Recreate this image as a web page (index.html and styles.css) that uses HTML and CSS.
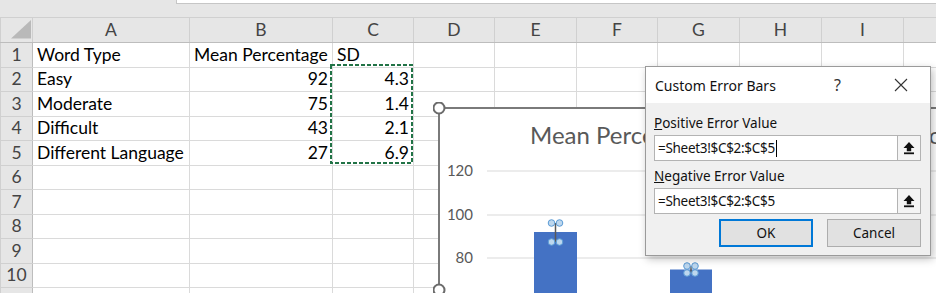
FILE: index.html
```html
<!DOCTYPE html>
<html lang="en">
<head>
    <meta charset="UTF-8">
    <title>Custom Error Bars</title>
    <link rel="stylesheet" href="styles.css">
</head>
<body>
<div class="window">
    <div class="toolbar"><div class="formula"></div></div>

    <table class="grid">
        <colgroup>
            <col class="c-head"><col class="c-a"><col class="c-b"><col class="c-c"><col class="c-d"><col class="c-e">
            <col class="c-f"><col class="c-g"><col class="c-h"><col class="c-i"><col class="c-j">
        </colgroup>
        <thead>
            <tr class="hrow">
                <th class="corner"><svg width="32" height="24" viewBox="0 0 32 24"><polygon points="10,20.5 30,20.5 30,2" fill="#b9b9b9"/></svg></th>
                <th>A</th><th>B</th><th>C</th><th>D</th><th>E</th><th>F</th><th>G</th><th>H</th><th>I</th><th></th>
            </tr>
        </thead>
        <tbody>
            <tr class="r25"><th>1</th><td>Word Type</td><td>Mean Percentage</td><td>SD</td><td></td><td></td><td></td><td></td><td></td><td></td><td></td></tr>
            <tr class="r24"><th>2</th><td>Easy</td><td class="num">92</td><td class="num">4.3</td><td></td><td></td><td></td><td></td><td></td><td></td><td></td></tr>
            <tr class="r25"><th>3</th><td>Moderate</td><td class="num">75</td><td class="num">1.4</td><td></td><td></td><td></td><td></td><td></td><td></td><td></td></tr>
            <tr class="r24"><th>4</th><td>Difficult</td><td class="num">43</td><td class="num">2.1</td><td></td><td></td><td></td><td></td><td></td><td></td><td></td></tr>
            <tr class="r25"><th>5</th><td>Different Language</td><td class="num">27</td><td class="num">6.9</td><td></td><td></td><td></td><td></td><td></td><td></td><td></td></tr>
            <tr class="r24"><th>6</th><td></td><td></td><td></td><td></td><td></td><td></td><td></td><td></td><td></td><td></td></tr>
            <tr class="r25"><th>7</th><td></td><td></td><td></td><td></td><td></td><td></td><td></td><td></td><td></td><td></td></tr>
            <tr class="r24"><th>8</th><td></td><td></td><td></td><td></td><td></td><td></td><td></td><td></td><td></td><td></td></tr>
            <tr class="r25"><th>9</th><td></td><td></td><td></td><td></td><td></td><td></td><td></td><td></td><td></td><td></td></tr>
            <tr class="r24"><th>10</th><td></td><td></td><td></td><td></td><td></td><td></td><td></td><td></td><td></td><td></td></tr>
            <tr class="r25"><th></th><td></td><td></td><td></td><td></td><td></td><td></td><td></td><td></td><td></td><td></td></tr>
        </tbody>
    </table>

    <!-- copy marquee round C2:C5 -->
    <svg class="marquee" width="84" height="101" viewBox="0 0 84 101">
        <rect x="1" y="1" width="81" height="98" fill="none" stroke="#217346" stroke-width="2" stroke-dasharray="4 2"/>
    </svg>

    <div class="chart">
        <svg width="503" height="191" viewBox="433 102 503 191">
            <rect x="439" y="108" width="500" height="190" fill="#fff"/>
            <line x1="439" y1="108" x2="940" y2="108" stroke="#7a7a7a" stroke-width="2"/>
            <line x1="439" y1="108" x2="439" y2="295" stroke="#7a7a7a" stroke-width="2"/>

            <text class="chart-title" x="530" y="144">Mean Percentage Correct for Every Word Type</text>

            <line x1="487" y1="171" x2="940" y2="171" stroke="#d9d9d9"/>
            <line x1="487" y1="215" x2="940" y2="215" stroke="#d9d9d9"/>
            <line x1="487" y1="258" x2="940" y2="258" stroke="#d9d9d9"/>
            <text class="axis" x="473" y="176">120</text>
            <text class="axis" x="473" y="220">100</text>
            <text class="axis" x="473" y="263">80</text>

            <rect x="534" y="232" width="43" height="70" fill="#4472c4"/>
            <line x1="555.5" y1="223" x2="555.5" y2="242" stroke="#595959" stroke-width="1.5"/>
            <circle class="eh" cx="551.5" cy="223" r="3.3"/>
            <circle class="eh" cx="559.5" cy="223" r="3.3"/>
            <circle class="eh" cx="551.5" cy="242" r="3.3"/>
            <circle class="eh" cx="559.5" cy="242" r="3.3"/>

            <rect x="670" y="269.5" width="42" height="40" fill="#4472c4"/>
            <line x1="691" y1="266" x2="691" y2="273" stroke="#595959" stroke-width="1.5"/>
            <circle class="eh" cx="687" cy="266" r="3.3"/>
            <circle class="eh" cx="695" cy="266" r="3.3"/>
            <circle class="eh" cx="687" cy="273" r="3.3"/>
            <circle class="eh" cx="695" cy="273" r="3.3"/>

            <circle cx="439" cy="108" r="5.5" fill="#fff" stroke="#6b6b6b" stroke-width="2"/>
            <circle cx="439" cy="290" r="5.5" fill="#fff" stroke="#6b6b6b" stroke-width="2"/>
        </svg>
    </div>

    <div class="dialog">
        <div class="dlg-title">
            <span class="dlg-name">Custom Error Bars</span>
            <span class="dlg-help">?</span>
            <span class="dlg-close"><svg width="14" height="14" viewBox="0 0 14 14"><path d="M1 1L13 13M13 1L1 13" stroke="#333" stroke-width="1.1"/></svg></span>
        </div>
        <div class="dlg-body">
            <div class="dlg-label"><u>P</u>ositive Error Value</div>
            <div class="ref-field">
                <span class="ref-text">=Sheet3!$C$2:$C$5</span><span class="caret"></span>
                <span class="ref-btn"><svg width="12" height="14" viewBox="0 0 12 14"><path d="M6 1L11.5 7H8.2V10.2H3.8V7H0.5Z" fill="#111"/><rect x="1" y="11.4" width="10" height="1.8" fill="#111"/></svg></span>
            </div>
            <div class="dlg-label second"><u>N</u>egative Error Value</div>
            <div class="ref-field">
                <span class="ref-text">=Sheet3!$C$2:$C$5</span>
                <span class="ref-btn"><svg width="12" height="14" viewBox="0 0 12 14"><path d="M6 1L11.5 7H8.2V10.2H3.8V7H0.5Z" fill="#111"/><rect x="1" y="11.4" width="10" height="1.8" fill="#111"/></svg></span>
            </div>
            <div class="dlg-buttons">
                <button class="dlg-btn default">OK</button>
                <button class="dlg-btn">Cancel</button>
            </div>
        </div>
    </div>
</div>
</body>
</html>
```

FILE: styles.css
```css
body {
    margin: 0;
    font-family: Lato, "Liberation Sans", sans-serif;
    background-color: #fff;
}
.window {
    position: relative;
    width: 936px;
    height: 293px;
    overflow: hidden;
    background-color: #fff;
}
.toolbar {
    height: 17px;
    background-color: #e6e6e6;
    display: flex;
}
.formula {
    margin-left: 176px;
    flex: 1;
    height: 3px;
    background-color: #fff;
    border-left: 1px solid #c6c6c6;
    border-bottom: 1px solid #c6c6c6;
}

/* sheet grid */
.grid {
    border-collapse: collapse;
    table-layout: fixed;
    width: 985px;
    font-size: 17.5px;
    color: #000;
}
.c-head { width: 32px; }
.c-a { width: 157px; }
.c-b { width: 143px; }
.c-c, .c-d, .c-f { width: 81px; }
.c-e, .c-g, .c-h, .c-i, .c-j { width: 82px; }
.grid td, .grid th {
    border: 1px solid #dadada;
    padding: 0 4px 2px;
    white-space: nowrap;
    overflow: hidden;
    vertical-align: bottom;
    text-align: left;
    font-weight: normal;
    line-height: 20px;
}
.grid td.num {
    text-align: right;
    padding-right: 4px;
}
.grid thead th {
    background-color: #e6e6e6;
    border-color: #d0d0d0;
    border-bottom: 1px solid #bdbdbd;
    color: #444;
    text-align: center;
    vertical-align: middle;
    padding: 0;
}
.grid tbody th {
    background-color: #e6e6e6;
    border-color: #d0d0d0;
    border-right: 1px solid #bdbdbd;
    color: #444;
    text-align: center;
    padding: 0 0 2px;
}
.grid th.corner {
    padding: 0;
    line-height: 0;
}
.hrow { height: 24px; }
.r25 { height: 25px; }
.r24 { height: 24px; }

.marquee {
    position: absolute;
    left: 330px;
    top: 64px;
}

/* chart object */
.chart {
    position: absolute;
    left: 433px;
    top: 102px;
    width: 503px;
    height: 191px;
}
.chart svg {
    display: block;
}
.chart-title {
    font-family: Lato, "Liberation Sans", sans-serif;
    font-size: 24px;
    fill: #595959;
}
.axis {
    font-family: Lato, "Liberation Sans", sans-serif;
    font-size: 15px;
    fill: #595959;
    text-anchor: end;
}
.eh {
    fill: #bdd7ee;
    stroke: #5b9bd5;
    stroke-width: 1;
}

/* dialog */
.dialog {
    position: absolute;
    left: 645px;
    top: 66px;
    width: 284px;
    height: 188px;
    border: 1px solid #9a9a9a;
    background-color: #f0f0f0;
    box-shadow: 2px 3px 8px rgba(0, 0, 0, 0.25);
    font-family: "Noto Sans", "Open Sans", sans-serif;
    font-size: 13px;
    color: #111;
}
.dlg-title {
    height: 36px;
    background-color: #fff;
    display: flex;
    align-items: center;
    padding-left: 9px;
}
.dlg-name {
    flex: 1;
    font-size: 14px;
}
.dlg-help {
    width: 20px;
    font-size: 16px;
    color: #333;
    margin-right: 40px;
}
.dlg-close {
    width: 14px;
    margin-right: 22px;
    display: flex;
}
.dlg-body {
    padding: 10px 9px 0 8px;
}
.dlg-label {
    height: 20px;
    line-height: 20px;
    margin-bottom: 2px;
    font-size: 13.5px;
}
.dlg-label.second {
    margin-top: 5px;
}
.ref-field {
    display: flex;
    align-items: center;
    height: 24px;
    border: 1px solid #b3b3b3;
    background-color: #fff;
}
.ref-text {
    padding-left: 3px;
    line-height: 24px;
    font-size: 13.5px;
    letter-spacing: -0.3px;
}
.caret {
    width: 1px;
    height: 17px;
    margin-left: 1px;
    background-color: #000;
}
.ref-btn {
    margin-left: auto;
    align-self: stretch;
    width: 22px;
    border-left: 1px solid #b3b3b3;
    background-color: #f4f4f4;
    display: flex;
    align-items: center;
    justify-content: center;
}
.dlg-buttons {
    display: flex;
    justify-content: flex-end;
    gap: 14px;
    margin-top: 5px;
}
.dlg-btn {
    width: 94px;
    height: 28px;
    border: 1px solid #adadad;
    background-color: #e1e1e1;
    font-family: "Noto Sans", "Open Sans", sans-serif;
    font-size: 13.5px;
    color: #111;
    padding: 0;
}
.dlg-btn.default {
    border: 2px solid #0078d7;
}
```
